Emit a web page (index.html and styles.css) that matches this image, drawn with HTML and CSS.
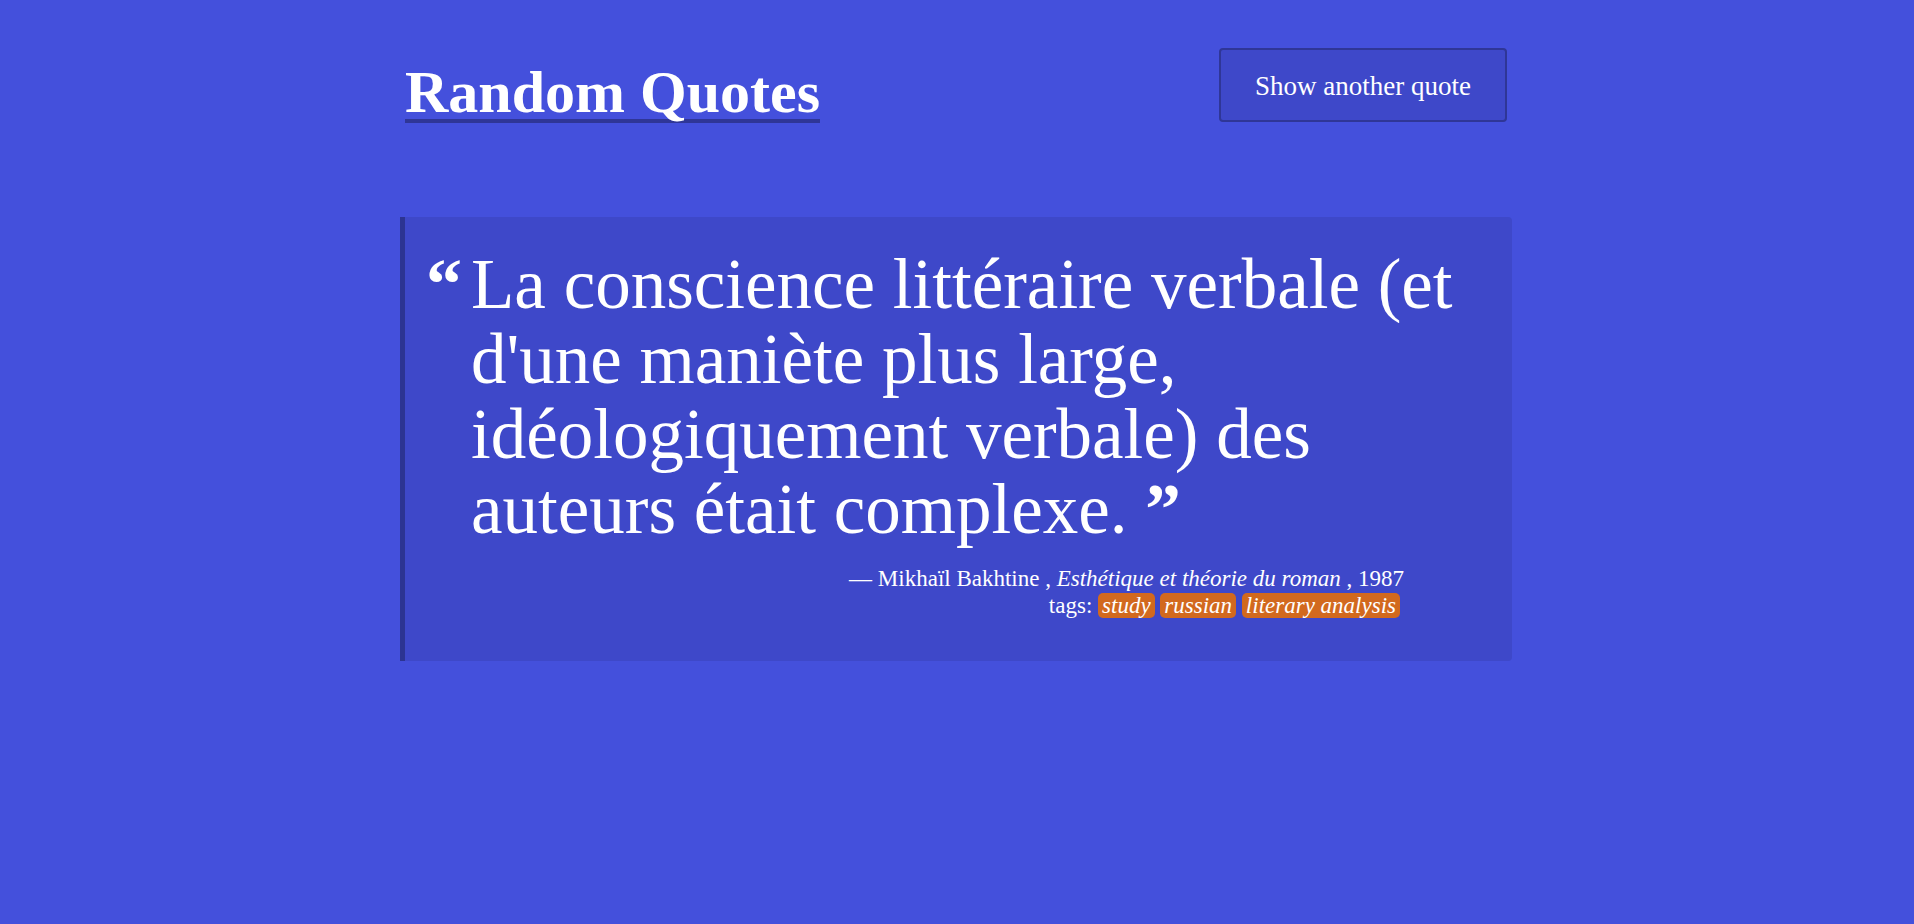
FILE: index.html
```html
<!DOCTYPE html>
<html lang="fr">
<head>
<meta charset="utf-8">
<title>Random Quotes</title>
<link rel="stylesheet" href="styles.css">
</head>
<body>
<div class="container">
  <header class="header">
    <h1 class="title">Random Quotes</h1>
    <button class="btn">Show another quote</button>
  </header>
  <blockquote class="quote">
    <div class="quote-body">
      <span class="mark">“</span>
      <p class="quote-text">La conscience littéraire verbale (et d'une maniète plus large, idéologiquement verbale) des auteurs était complexe. <span class="close">”</span></p>
    </div>
    <footer class="footer">
      <div class="source">— Mikhaïl Bakhtine , <cite>Esthétique et théorie du roman</cite> , 1987</div>
      <div class="tags">tags: <span class="tag">study</span> <span class="tag">russian</span> <span class="tag">literary analysis</span></div>
    </footer>
  </blockquote>
</div>
</body>
</html>
```
FILE: styles.css
```css
html, body {
  margin: 0;
  padding: 0;
}
body {
  background: #4450dc;
  color: #ffffff;
  font-family: "Liberation Serif", "DejaVu Serif", serif;
  min-height: 924px;
}
.container {
  width: 1110px;
  margin: 0 auto;
}
.header {
  display: flex;
  justify-content: space-between;
  align-items: flex-start;
  padding-top: 48px;
}
.title {
  margin: 17px 0 0 3px;
  font-size: 60px;
  line-height: 54px;
  font-weight: bold;
  border-bottom: 4px solid #2f3697;
}
.btn {
  width: 288px;
  height: 74px;
  margin-right: 5px;
  background: #3e48c9;
  color: #ffffff;
  border: 2px solid #2f3697;
  border-radius: 4px;
  font-family: "Liberation Serif", "DejaVu Serif", serif;
  font-size: 27px;
  padding: 2px 0 0;
}
.quote {
  margin: 94px 0 0 -2px;
  background: #3e48c9;
  border-left: 5px solid #2c3492;
  border-radius: 0 4px 4px 0;
  padding: 30px 20px 42px 21px;
}
.quote-body {
  display: flex;
  align-items: flex-start;
  gap: 12px;
}
.mark {
  font-size: 72px;
  line-height: 75px;
  font-weight: bold;
  width: 33px;
  flex: none;
}
.quote-text {
  margin: 0;
  font-size: 71px;
  line-height: 75px;
}
.quote-text .close {
  font-weight: bold;
}
.footer {
  margin-top: 18px;
  padding-right: 88px;
  text-align: right;
  font-size: 23px;
  line-height: 27px;
}
.source cite {
  font-style: italic;
}
.tags {
  padding-right: 4px;
}
.tag {
  background: #d2691e;
  font-style: italic;
  border-radius: 5px;
  padding: 0 4px;
}
```
